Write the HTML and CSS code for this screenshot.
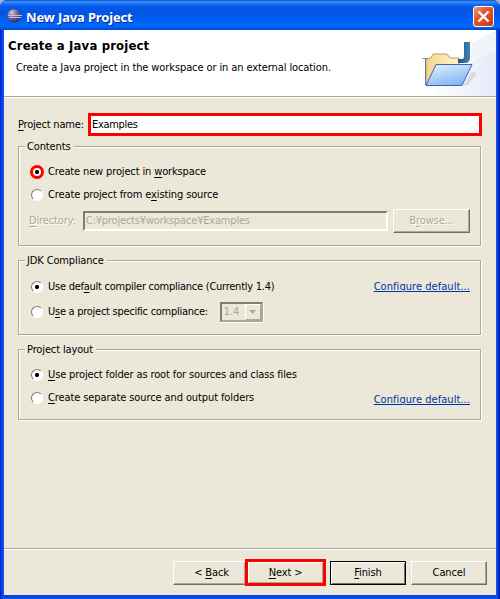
FILE: index.html
```
<!DOCTYPE html>
<html lang="en">
<head>
<meta charset="utf-8">
<title>New Java Project</title>
<link rel="stylesheet" href="styles.css">
</head>
<body>
<div class="window">
  <div class="titlebar">
    <svg class="logo" width="16" height="16" viewBox="0 0 16 16">
      <defs><radialGradient id="orb" cx=".35" cy=".25" r=".8"><stop offset="0" stop-color="#e0c4cf"/><stop offset=".45" stop-color="#766a9d"/><stop offset="1" stop-color="#25246d"/></radialGradient></defs>
      <circle cx="7" cy="8" r="6.800" fill="url(#orb)"/>
      <path d="M1 7.500h14M2 9.500h12" stroke="#c6c8ea" stroke-width=".9"/>
    </svg>
    <span class="title">New Java Project</span>
    <span class="close"><svg width="21" height="21" viewBox="0 0 21 21"><path d="M5.5 5.5l10 10M15.5 5.5l-10 10" stroke="#fff" stroke-width="2.4"/></svg></span>
  </div>
  <div class="client">
    <header class="banner">
      <div class="banner-text">
        <h1>Create a Java project</h1>
        <p>Create a Java project in the workspace or in an external location.</p>
      </div>
      <svg class="art" width="96" height="66" viewBox="400 30 96 66">
        <defs>
          <linearGradient id="sweep" x1="0" y1="0" x2="1" y2="0"><stop offset="0" stop-color="#fff"/><stop offset="1" stop-color="#d9e1f4"/></linearGradient>
          <linearGradient id="front" x1="0" y1="0" x2=".5" y2="1"><stop offset="0" stop-color="#e4f3ff"/><stop offset="1" stop-color="#86b8f0"/></linearGradient>
          <linearGradient id="back" x1="0" y1="0" x2="1" y2="0"><stop offset="0" stop-color="#f3d58c"/><stop offset="1" stop-color="#fff4c9"/></linearGradient>
          <linearGradient id="jay" x1="0" y1="0" x2="1" y2="0"><stop offset="0" stop-color="#1c5787"/><stop offset="1" stop-color="#4384ae"/></linearGradient>
        </defs>
        <path d="M496 50Q459 64 428 96H496Z" fill="url(#sweep)" opacity=".7"/>
        <path d="M470 61L472 43Q486 36 496 30V52Q482 55 470 61Z" fill="#f1f3fb"/>
        <path d="M463 86l9-14 5 1-9 12z" fill="#cbd0df" opacity=".7"/>
        <path d="M422 58.500H430" stroke="#8e98ad"/>
        <path d="M426 85V60l3-2h2l2-4h14l3 4h9v14l-31 14z" fill="url(#back)" stroke="#b69f62"/>
        <path d="M425.500 85V58" stroke="#6478b7"/>
        <path d="M464 42h6v16q0 5-5 5h-7v-4h4q2 0 2-2z" fill="url(#jay)"/>
        <path d="M436 64.500h36l-10 21h-36z" fill="url(#front)" stroke="#4263b5"/>
      </svg>
    </header>
    <main>
      <div class="name-row"><label class="t-name"><u>P</u>roject name:</label><div class="name-input">Examples</div></div>

      <section class="group contents">
        <div class="legend">Contents</div>
        <div class="row"><i class="radio on marked"></i><span class="t-new">Create new project in <u>w</u>orkspace</span></div>
        <div class="row"><i class="radio"></i><span class="t-exist">Create project from e<u>x</u>isting source</span></div>
        <div class="dir-row"><label><u>D</u>irectory:</label><div class="dir-input">C:¥projects¥workspace¥Examples</div><div class="btn disabled">B<u>r</u>owse...</div></div>
      </section>

      <section class="group jdk">
        <div class="legend">JDK Compliance</div>
        <div class="row"><i class="radio on"></i><span class="t-default">Use def<u>a</u>ult compiler compliance (Currently 1.4)</span><a>Configure default...</a></div>
        <div class="row"><i class="radio"></i><span class="t-specific">U<u>s</u>e a project specific compliance:</span>
          <div class="combo"><span>1.4</span><b><svg width="7" height="4" viewBox="0 0 7 4"><path d="M0 0h7L3.500 4z" fill="#aca899"/></svg></b></div></div>
      </section>

      <section class="group layout">
        <div class="legend">Project layout</div>
        <div class="row"><i class="radio on"></i><span class="t-root"><u>U</u>se project folder as root for sources and class files</span></div>
        <div class="row"><i class="radio"></i><span class="t-separate"><u>C</u>reate separate source and output folders</span><a class="low">Configure default...</a></div>
      </section>
    </main>
    <footer>
      <div class="btn back">&lt; <u>B</u>ack</div>
      <div class="btn next"><span><u>N</u>ext &gt;</span></div>
      <div class="btn finish"><u>F</u>inish</div>
      <div class="btn cancel">Cancel</div>
    </footer>
  </div>
</div>
</body>
</html>
```
FILE: styles.css
```
* { box-sizing: border-box; }
body {
  margin: 0;
  font: 11px/16px "DejaVu Sans Condensed", "DejaVu Sans", sans-serif;
  font-stretch: condensed;
  letter-spacing: -0.13px;
  color: #000;
  background: #a7b4dc;
}
u { text-decoration: underline; text-underline-offset: 2px; text-decoration-thickness: 1px; }
span, label, a, p, h1 { white-space: nowrap; }
.window {
  width: 500px;
  height: 599px;
  display: flex;
  flex-direction: column;
  border-radius: 7px 7px 0 0;
  overflow: hidden;
  background: linear-gradient(90deg, #0019cf 0, #0831d9 1px, #0855f0 3px, #0855f0 497px, #0030d8 498px, #00138c 500px);
}
.titlebar {
  height: 30px;
  flex: none;
  display: flex;
  align-items: center;
  padding: 3px 6px 0 7px;
  background: linear-gradient(#0b4fd0 0, #3b92ff 2px, #1570f4 4px, #0558e5 7px, #0055e4 14px, #0061f8 20px, #0066ff 26px, #005be8 28px, #0045c8 30px);
}
.logo { display: block; margin-top: -1px; }
.title {
  margin: 0 0 0 3px;
  font: bold 13px/20px "Noto Sans", sans-serif;
  letter-spacing: -0.15px;
  color: #fff;
  text-shadow: 1px 1px 0 #0a2a8c;
  flex: 1;
}
.close { width: 21px; height: 21px; border: 1px solid #fff; border-radius: 3px; background: linear-gradient(135deg, #ef9a7f, #e2562f 40%, #c9380f); }
.close svg { display: block; margin: -1px; }
.client { margin: 0 4px 4px; flex: 1; display: flex; flex-direction: column; background: #ece8d9; box-shadow: 0 3px #0843e8; }
.banner { height: 67px; flex: none; display: flex; justify-content: space-between; background: #fff; border-bottom: 1px solid #aca899; box-shadow: 0 1px #fff; }
.banner-text { padding: 7px 0 0 4px; }
h1 { margin: 0; font: bold 13px/17px "DejaVu Sans Condensed", sans-serif; font-stretch: condensed; letter-spacing: 0.15px; }
p { margin: 6px 0 0 8px; letter-spacing: -0.1px; }
.art { display: block; }
main { padding: 16px 14px 0; flex: 1; }
.name-row { display: flex; height: 23px; align-items: center; }
.name-row label { width: 71px; letter-spacing: -0.2px; }
.name-input { width: 394px; height: 23px; flex: none; border: 3px solid #f00; background: #fff; line-height: 17px; padding-left: 1px; letter-spacing: -0.3px; }
.group { width: 463px; border: 1px solid #aca899; box-shadow: 1px 1px #fff, inset 1px 1px #fff; padding: 0 10px 0 11px; }
.contents { height: 100px; margin-top: 10px; }
.jdk { height: 75px; margin-top: 14px; }
.layout { height: 71px; margin-top: 14px; }
.legend { width: fit-content; height: 16px; margin: -8px 0 5px -5px; padding: 0 3px 0 2px; background: #ece8d9; }
.row { display: flex; align-items: center; height: 23px; }
.row a { margin-left: auto; letter-spacing: 0.05px; color: #0033a8; text-decoration: underline 1px; text-underline-offset: 1px; }
.row .low { padding-top: 4px; }
.t-new { letter-spacing: -0.14px; }
.t-exist { letter-spacing: -0.12px; }
.t-default { letter-spacing: -0.25px; }
.t-specific { letter-spacing: -0.27px; }
.t-separate { letter-spacing: -0.1px; }
.jdk .row { height: 25px; }
.radio { flex: none; width: 12px; height: 12px; margin: 0 5px 0 1px; border: 1px solid #aca899; border-color: #7e7b6e #fff #fff #7e7b6e; border-radius: 50%; background: #fff; }
.on { background: radial-gradient(circle, #000 1.6px, #fff 2.400px); }
.marked { width: 14px; height: 14px; margin: 0 4px 0 0; border: 3px solid #f00; }
.dir-row { display: flex; align-items: center; height: 24px; margin-top: 3px; color: #aca899; text-shadow: 1px 1px #fff; }
.dir-row label { width: 53px; margin-left: -1px; }
.dir-input { width: 306px; height: 20px; margin-left: 1px; border: 2px solid; border-color: #817d6c #fff #fff #817d6c; padding-left: 1px; letter-spacing: -0.19px; text-shadow: none; }
.dir-row .btn { width: 77px; margin-left: 5px; }
.btn { flex: none; width: 76px; height: 24px; line-height: 21px; text-align: center; border: 1px solid; border-color: #fff #716f64 #716f64 #fff; box-shadow: inset -1px -1px #aca899; }
.combo { display: flex; width: 43px; height: 20px; margin-left: 12px; border: 2px solid; border-color: #817d6c #aca899 #aca899 #817d6c; box-shadow: 1px 1px #fff; color: #aca899; }
.combo span { width: 23px; padding-left: 2px; }
.combo b { display: flex; width: 16px; align-items: center; justify-content: center; border: 1px solid; border-color: #fff #aca899 #aca899 #fff; }
footer { height: 47px; flex: none; display: flex; border-top: 1px solid #aca899; box-shadow: inset 0 1px #fff; padding: 12px 9px 0 0; justify-content: flex-end; }
footer .back { width: 73px; padding-left: 4px; }
footer .next { width: 81px; height: 27px; margin: -2px 4px 0 -1px; border: 3px solid #f00; box-shadow: inset 1px 1px #fff, inset -1px -1px #aca899; }
.finish { border-color: #000; margin-right: 5px; box-shadow: inset 1px 1px #fff, inset -1px -1px #716f64; }
```
